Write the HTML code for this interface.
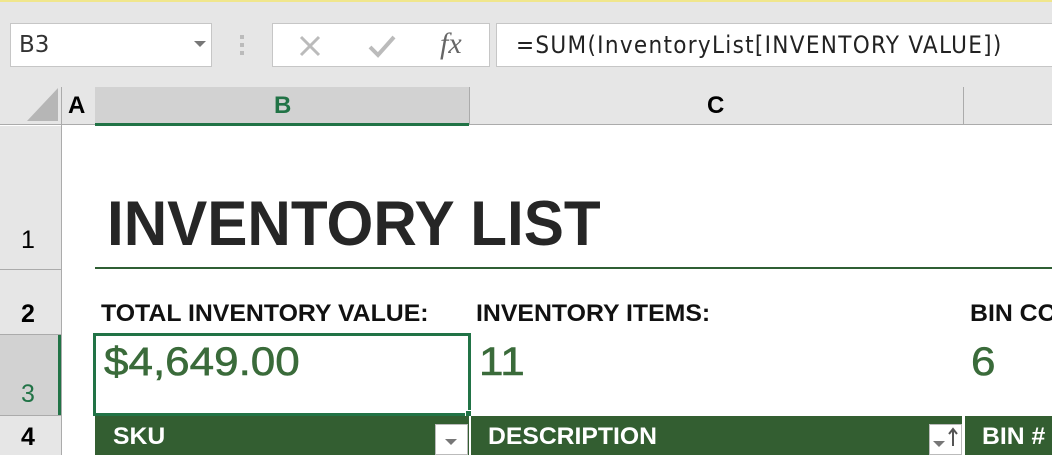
<!DOCTYPE html>
<html><head><style>
*{margin:0;padding:0;box-sizing:border-box}
body{width:1052px;height:455px;overflow:hidden;background:#fff;position:relative;font-family:"Liberation Sans",sans-serif}
.a{position:absolute;white-space:nowrap}
.n{font-family:"Liberation Sans",sans-serif;font-weight:bold;transform-origin:0 0}
</style></head><body>
<div class="a" style="left:0;top:0;width:1052px;height:87px;background:#e6e6e6"></div>
<div class="a" style="left:0;top:0;width:1052px;height:2px;background:#f0e68c"></div>
<div class="a" style="left:10px;top:23px;width:202px;height:44px;background:#fff;border:1px solid #c6c6c6"></div>
<div class="a" style="left:19px;top:32px;font-size:23px;color:#333;font-family:'DejaVu Sans',sans-serif">B3</div>
<div class="a" style="left:194px;top:41px;width:0;height:0;border-left:6px solid transparent;border-right:6px solid transparent;border-top:6px solid #777"></div>
<div class="a" style="left:240px;top:35px;width:4px;height:4px;background:#bbb;box-shadow:0 8px 0 #bbb,0 16px 0 #bbb"></div>
<div class="a" style="left:272px;top:23px;width:218px;height:44px;background:#fff;border:1px solid #c6c6c6"></div>
<svg class="a" style="left:298px;top:34px" width="24" height="24"><path d="M3 3L21 21M21 3L3 21" stroke="#bbb" stroke-width="3"/></svg>
<svg class="a" style="left:368px;top:34px" width="28" height="24"><path d="M2 13L10 21L26 3" stroke="#bbb" stroke-width="4" fill="none"/></svg>
<div class="a" style="left:440px;top:27px;font-size:30px;font-style:italic;color:#666;font-family:'Liberation Serif',serif">fx</div>
<div class="a" style="left:496px;top:23px;width:560px;height:44px;background:#fff;border:1px solid #c6c6c6"></div>
<div class="a" style="left:516px;top:31px;font-size:24px;color:#222;font-family:'DejaVu Sans Condensed','DejaVu Sans',sans-serif;letter-spacing:1.3px">=SUM(InventoryList[INVENTORY VALUE])</div>
<!-- column headers -->
<div class="a" style="left:0;top:87px;width:1052px;height:38px;background:#e6e6e6;border-bottom:1px solid #ababab"></div>
<svg class="a" style="left:27px;top:88px" width="32" height="34"><path d="M31 0V33H0Z" fill="#b6b6b6"/></svg>
<div class="a" style="left:61px;top:87px;width:1px;height:368px;background:#ababab"></div>
<div class="a" style="left:95px;top:87px;width:374px;height:39px;background:#d2d2d2;border-bottom:3px solid #217346"></div>
<div class="a" style="left:469px;top:87px;width:1px;height:38px;background:#ababab"></div>
<div class="a" style="left:963px;top:87px;width:1px;height:38px;background:#ababab"></div>
<div class="a" style="left:68px;top:92px;font-size:24px;font-weight:bold">A</div>
<div class="a" style="left:274px;top:92px;font-size:24px;font-weight:bold;color:#217346">B</div>
<div class="a" style="left:707px;top:92px;font-size:24px;font-weight:bold">C</div>
<!-- row headers -->
<div class="a" style="left:0;top:126px;width:61px;height:329px;background:#e6e6e6"></div>
<div class="a" style="left:0;top:269px;width:61px;height:1px;background:#ababab"></div>
<div class="a" style="left:0;top:334px;width:61px;height:1px;background:#ababab"></div>
<div class="a" style="left:0;top:335px;width:61px;height:80px;background:#d2d2d2;border-right:3px solid #217346"></div>
<div class="a" style="left:0;top:415px;width:61px;height:1px;background:#ababab"></div>
<div class="a" style="left:21px;top:226px;font-size:25px">1</div>
<div class="a" style="left:21px;top:300px;font-size:25px;font-weight:bold">2</div>
<div class="a" style="left:21px;top:380px;font-size:25px;color:#217346">3</div>
<div class="a" style="left:21px;top:423px;font-size:25px;font-weight:bold">4</div>
<!-- content -->
<div class="a n" style="left:107px;top:193px;font-size:63px;color:#262626;line-height:1;transform:scaleX(0.955)">INVENTORY LIST</div>
<div class="a" style="left:95px;top:267px;width:957px;height:2px;background:#2f5f34"></div>
<div class="a n" style="left:101px;top:300px;font-size:24px;color:#111;transform:scaleX(1.035)">TOTAL INVENTORY VALUE:</div>
<div class="a n" style="left:476px;top:300px;font-size:24px;color:#111;transform:scaleX(1.035)">INVENTORY ITEMS:</div>
<div class="a n" style="left:970px;top:300px;font-size:24px;color:#111;transform:scaleX(1.035)">BIN CO</div>
<div class="a" style="left:104px;top:340px;font-size:40px;color:#3a6b3a;transform:scaleX(1.1);transform-origin:0 0;-webkit-text-stroke:0.6px #3a6b3a">$4,649.00</div>
<div class="a" style="left:479px;top:340px;font-size:40px;color:#3a6b3a;transform:scaleX(1.1);transform-origin:0 0;-webkit-text-stroke:0.6px #3a6b3a">11</div>
<div class="a" style="left:971px;top:340px;font-size:40px;color:#3a6b3a;transform:scaleX(1.1);transform-origin:0 0;-webkit-text-stroke:0.6px #3a6b3a">6</div>
<div class="a" style="left:93px;top:333px;width:378px;height:83px;border:3px solid #217346"></div>
<div class="a" style="left:465px;top:410px;width:7px;height:7px;background:#217346;border:1px solid #fff"></div>
<!-- table header -->
<div class="a" style="left:95px;top:416px;width:374px;height:39px;background:#335e31"></div>
<div class="a" style="left:471px;top:416px;width:491px;height:39px;background:#335e31"></div>
<div class="a" style="left:965px;top:416px;width:87px;height:39px;background:#335e31"></div>
<div class="a n" style="left:113px;top:423px;font-size:24px;color:#fff;transform:scaleX(1.03)">SKU</div>
<div class="a n" style="left:488px;top:423px;font-size:24px;color:#fff;transform:scaleX(1.03)">DESCRIPTION</div>
<div class="a n" style="left:982px;top:423px;font-size:24px;color:#fff;transform:scaleX(1.03)">BIN #</div>
<div class="a" style="left:435px;top:424px;width:33px;height:31px;background:#fff;border:1px solid #bbb"></div>
<div class="a" style="left:445px;top:439px;border-left:6px solid transparent;border-right:6px solid transparent;border-top:6px solid #777"></div>
<div class="a" style="left:929px;top:424px;width:33px;height:31px;background:#fff;border:1px solid #bbb"></div>
<div class="a" style="left:933px;top:441px;border-left:6px solid transparent;border-right:6px solid transparent;border-top:6px solid #777"></div>
<svg class="a" style="left:947px;top:427px" width="12" height="20"><path d="M6 19V3M2 7L6 2L10 7" stroke="#555" stroke-width="2" fill="none"/></svg>
</body></html>
